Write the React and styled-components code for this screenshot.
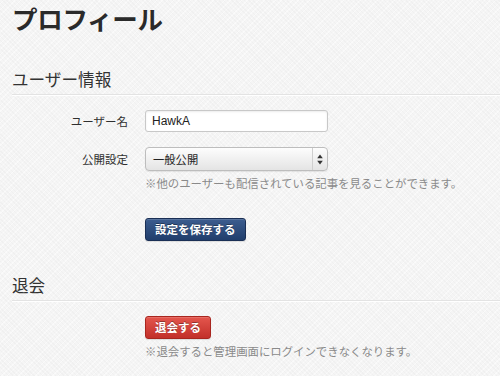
import React from "react";
import styled, { createGlobalStyle } from "styled-components";

const Global = createGlobalStyle`
  html, body { margin: 0; padding: 0; }
  body {
    width: 500px;
    height: 376px;
    overflow: hidden;
    background-color: #f5f5f5;
    background-image:
      repeating-linear-gradient(45deg, rgba(0,0,0,0.018) 0 1px, transparent 1px 3px),
      repeating-linear-gradient(-45deg, rgba(255,255,255,0.5) 0 1px, transparent 1px 4px);
    font-family: "Noto Sans CJK JP", "Liberation Sans", sans-serif;
    color: #333;
  }
`;

const Page = styled.div`
  padding: 0 0 0 12px;
`;

const Title = styled.h1`
  margin: 0;
  font-size: 25.5px;
  line-height: 36px;
  font-weight: 700;
  color: #2a2a2a;
  letter-spacing: -0.3px;
`;

const SectionHeading = styled.h2`
  margin: ${(p) => p.$top}px 0 0;
  padding-bottom: 3px;
  font-size: 16.6px;
  line-height: 24px;
  font-weight: 400;
  color: #333;
  border-bottom: 1px solid #e3e3e3;
  box-shadow: 0 1px 0 #fff;
`;

const Form = styled.div`
  display: flex;
  flex-direction: column;
  margin-top: ${(p) => p.$top}px;
`;

const FieldRow = styled.div`
  display: grid;
  grid-template-columns: 128px 183px;
  column-gap: 17px;
  align-items: center;
  margin-top: ${(p) => p.$top || 0}px;
`;

const Label = styled.label`
  text-align: right;
  font-size: 11.5px;
  line-height: 16px;
  color: #2f2f2f;
`;

const TextInput = styled.input`
  box-sizing: border-box;
  width: 183px;
  height: 22px;
  margin: 0;
  padding: 0 6px;
  border: 1px solid #c8c8c8;
  border-radius: 3px;
  background: #fff;
  box-shadow: inset 0 1px 2px rgba(0, 0, 0, 0.08);
  font-family: "Liberation Sans", "Noto Sans CJK JP", sans-serif;
  font-size: 12px;
  color: #222;
  outline: none;
`;

const SelectBox = styled.div`
  box-sizing: border-box;
  width: 183px;
  height: 24px;
  display: flex;
  align-items: stretch;
  border: 1px solid #bdbdbd;
  border-radius: 4px;
  background: linear-gradient(#fdfdfd, #e4e4e4);
  box-shadow: 0 1px 1px rgba(0, 0, 0, 0.08);
`;

const SelectValue = styled.span`
  flex: 1;
  padding-left: 7px;
  font-size: 11.3px;
  line-height: 22px;
  color: #222;
`;

const SelectArrows = styled.span`
  width: 14px;
  border-left: 1px solid #cfcfcf;
  display: flex;
  align-items: center;
  justify-content: center;
`;

const Hint = styled.p`
  margin: ${(p) => p.$top}px 0 0 145px;
  font-size: 11.4px;
  line-height: 16px;
  color: #8a8a8a;
  white-space: nowrap;
`;

const ActionRow = styled.div`
  padding-left: 145px;
  margin-top: ${(p) => p.$top}px;
  display: flex;
`;

const Button = styled.button`
  box-sizing: border-box;
  height: 23px;
  margin: 0;
  padding: 0 9px;
  border-radius: 3px;
  font-family: "Noto Sans CJK JP", "Liberation Sans", sans-serif;
  font-size: 11.5px;
  font-weight: 700;
  line-height: 21px;
  color: #fff;
  text-shadow: 0 -1px 0 rgba(0, 0, 0, 0.35);
  cursor: pointer;
  border: 1px solid ${(p) => (p.$danger ? "#a8261f" : "#1a2f55")};
  background: ${(p) =>
    p.$danger
      ? "linear-gradient(#e4564d, #c2302a)"
      : "linear-gradient(#3c5d8f, #213e6c)"};
  box-shadow: inset 0 1px 0 rgba(255, 255, 255, 0.15), 0 1px 1px rgba(0, 0, 0, 0.1);
`;

const Arrows = () => (
  <svg width="6" height="11" viewBox="0 0 6 11">
    <path d="M3 0.5 L5.8 4.3 H0.2 Z" fill="#333" />
    <path d="M3 10.5 L5.8 6.7 H0.2 Z" fill="#333" />
  </svg>
);

export default function App() {
  return (
    <>
      <Global />
      <Page>
        <Title>プロフィール</Title>
        <SectionHeading $top={31}>ユーザー情報</SectionHeading>
      </Page>
      <Form $top={15}>
        <FieldRow>
          <Label>ユーザー名</Label>
          <TextInput defaultValue="HawkA" />
        </FieldRow>
        <FieldRow $top={15}>
          <Label>公開設定</Label>
          <SelectBox>
            <SelectValue>一般公開</SelectValue>
            <SelectArrows>
              <Arrows />
            </SelectArrows>
          </SelectBox>
        </FieldRow>
        <Hint $top={4}>※他のユーザーも配信されている記事を見ることができます。</Hint>
        <ActionRow $top={27}>
          <Button>設定を保存する</Button>
        </ActionRow>
      </Form>
      <Page>
        <SectionHeading $top={32}>退会</SectionHeading>
      </Page>
      <ActionRow $top={15}>
        <Button $danger>退会する</Button>
      </ActionRow>
      <Hint $top={4}>※退会すると管理画面にログインできなくなります。</Hint>
    </>
  );
}
